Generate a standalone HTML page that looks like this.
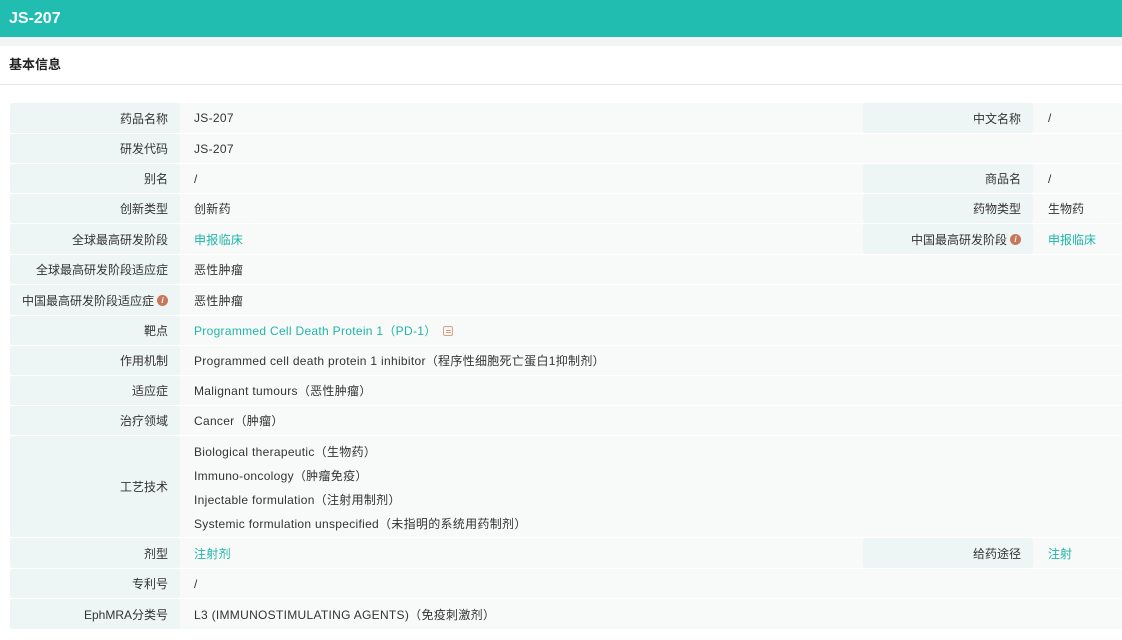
<!DOCTYPE html>
<html><head><meta charset="utf-8"><style>
*{margin:0;padding:0;box-sizing:border-box}
body{width:1122px;height:640px;background:#fff;font-family:"Liberation Sans","Noto Sans CJK SC",sans-serif;font-size:12px;color:#333;position:relative;overflow:hidden}
.hd{position:absolute;left:0;top:0;width:1122px;height:37px;background:#20bdb0;color:#fff;font-weight:bold;font-size:16px;line-height:37px;padding-left:9px}
.band{position:absolute;left:0;top:37px;width:1122px;height:9px;background:#f3f4f6}
.sec{position:absolute;left:0;top:46px;width:1122px;height:39px;border-bottom:1px solid #e6e6e6;font-weight:bold;font-size:13px;line-height:37px;padding-left:9px;color:#222}
.r{position:absolute;left:10px;width:1112px;background:#f8faf9}
.l{position:absolute;left:0;top:0;bottom:0;width:170px;background:#eef5f5;border-radius:3px;text-align:right;padding-right:12px;display:flex;align-items:center;justify-content:flex-end}
.v{position:absolute;left:184px;top:0;bottom:0;display:flex;align-items:center;letter-spacing:0.3px;white-space:nowrap}
.l2{position:absolute;left:853px;top:0;bottom:0;width:170px;background:#eef5f5;border-radius:3px;padding-right:12px;display:flex;align-items:center;justify-content:flex-end}
.v2{position:absolute;left:1038px;top:0;bottom:0;display:flex;align-items:center}
.t{color:#1fb5a8}
.i{display:inline-block;width:11px;height:11px;border-radius:50%;background:#c8775a;color:#fff;font-size:8px;line-height:11px;text-align:center;font-style:italic;font-weight:bold;margin-left:3px}
.m{position:absolute;left:184px;top:6px;line-height:24px;letter-spacing:0.3px;white-space:nowrap}
</style></head><body>
<div class="hd">JS-207</div><div class="band"></div>
<div class="sec">基本信息</div>

<div class="r" style="top:103px;height:30px"><div class="l">药品名称</div><div class="v">JS-207</div><div class="l2">中文名称</div><div class="v2">/</div></div>
<div class="r" style="top:134px;height:29px"><div class="l">研发代码</div><div class="v">JS-207</div></div>
<div class="r" style="top:164px;height:29px"><div class="l">别名</div><div class="v">/</div><div class="l2">商品名</div><div class="v2">/</div></div>
<div class="r" style="top:194px;height:29px"><div class="l">创新类型</div><div class="v">创新药</div><div class="l2">药物类型</div><div class="v2">生物药</div></div>
<div class="r" style="top:224px;height:30px"><div class="l">全球最高研发阶段</div><div class="v t">申报临床</div><div class="l2">中国最高研发阶段<span class="i">i</span></div><div class="v2 t">申报临床</div></div>
<div class="r" style="top:255px;height:29px"><div class="l">全球最高研发阶段适应症</div><div class="v">恶性肿瘤</div></div>
<div class="r" style="top:285px;height:30px"><div class="l">中国最高研发阶段适应症<span class="i">i</span></div><div class="v">恶性肿瘤</div></div>
<div class="r" style="top:316px;height:29px"><div class="l">靶点</div><div class="v t">Programmed Cell Death Protein 1（PD-1）<span style="display:inline-block;width:10px;height:10px;border:1px solid #e0a080;border-radius:2px;margin-left:6px;position:relative"><span style="position:absolute;left:2px;top:3px;width:5px;height:3px;border-top:1px solid #e0a080;border-bottom:1px solid #e0a080"></span></span></div></div>
<div class="r" style="top:346px;height:29px"><div class="l">作用机制</div><div class="v">Programmed cell death protein 1 inhibitor（程序性细胞死亡蛋白1抑制剂）</div></div>
<div class="r" style="top:376px;height:29px"><div class="l">适应症</div><div class="v">Malignant tumours（恶性肿瘤）</div></div>
<div class="r" style="top:406px;height:29px"><div class="l">治疗领域</div><div class="v">Cancer（肿瘤）</div></div>
<div class="r" style="top:436px;height:101px"><div class="l">工艺技术</div><div class="m" style="top:4px">Biological therapeutic（生物药）<br>Immuno-oncology（肿瘤免疫）<br>Injectable formulation（注射用制剂）<br>Systemic formulation unspecified（未指明的系统用药制剂）</div></div>
<div class="r" style="top:538px;height:30px"><div class="l">剂型</div><div class="v t">注射剂</div><div class="l2">给药途径</div><div class="v2 t">注射</div></div>
<div class="r" style="top:569px;height:29px"><div class="l">专利号</div><div class="v">/</div></div>
<div class="r" style="top:599px;height:30px"><div class="l">EphMRA分类号</div><div class="v">L3 (IMMUNOSTIMULATING AGENTS)（免疫刺激剂）</div></div>
</body></html>
